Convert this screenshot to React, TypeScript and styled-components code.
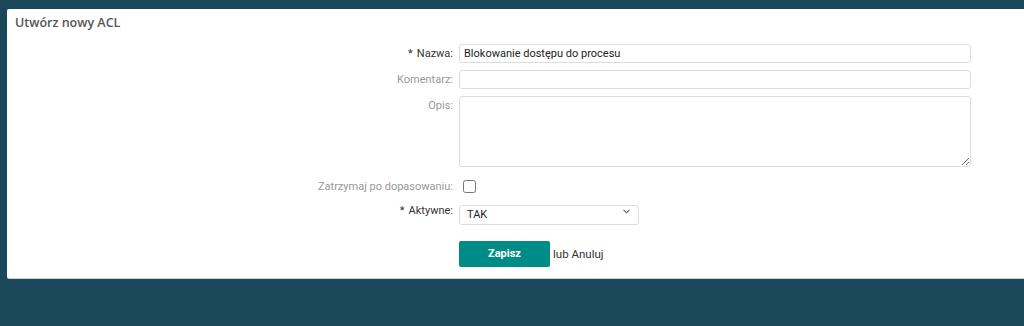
import React from "react";
import styled, { createGlobalStyle } from "styled-components";

const Global = createGlobalStyle`
  html, body { margin: 0; padding: 0; background: #1b475b; }
  body { font-family: "Open Sans", "Liberation Sans", sans-serif; }
`;

const Page = styled.div`
  padding: 9px 0 0 7px;
  height: 326px;
  box-sizing: border-box;
`;

const Panel = styled.div`
  background: #fff;
  border-radius: 2px 0 0 2px;
  box-shadow: 0 1px 0 #c9d0d4;
  height: 269px;
  box-sizing: border-box;
  padding: 6px 0 0 8px;
`;

const Title = styled.h2`
  margin: 0;
  font-size: 12.5px;
  font-weight: 600;
  color: #555;
  line-height: 16px;
`;

const Form = styled.form`
  display: grid;
  grid-template-columns: 438px 512px;
  column-gap: 6px;
  margin-top: 13px;
  align-items: start;
`;

const Label = styled.label<{ $required?: boolean; $h?: number }>`
  text-align: right;
  font-family: "Roboto", "Liberation Sans", sans-serif;
  font-size: 11px;
  line-height: ${(p) => p.$h ?? 19}px;
  color: ${(p) => (p.$required ? "#333" : "#999")};
  white-space: nowrap;
`;

const Star = styled.span`
  margin-right: 4px;
`;

const Field = styled.div<{ $mb?: number }>`
  margin-bottom: ${(p) => p.$mb ?? 7}px;
  display: flex;
  align-items: center;
`;

const TextInput = styled.input`
  width: 100%;
  height: 19px;
  box-sizing: border-box;
  border: 1px solid #ddd;
  border-radius: 3px;
  padding: 0 4px;
  font-family: "Roboto", "Liberation Sans", sans-serif;
  font-size: 11px;
  color: #222;
  outline: none;
`;

const TextArea = styled.textarea`
  width: 100%;
  height: 71px;
  box-sizing: border-box;
  border: 1px solid #ddd;
  border-radius: 3px;
  resize: vertical;
  font-family: "Roboto", "Liberation Sans", sans-serif;
  font-size: 11px;
  outline: none;
  display: block;
`;

const Check = styled.input`
  width: 13px;
  height: 13px;
  margin: 0 0 0 4px;
`;

const Select = styled.select`
  width: 180px;
  height: 20px;
  box-sizing: border-box;
  border: 1px solid #ddd;
  border-radius: 3px;
  padding: 0 0 0 7px;
  font-family: "Roboto", "Liberation Sans", sans-serif;
  font-size: 11px;
  color: #222;
  background: #fff;
  appearance: none;
  outline: none;
`;

const SelectWrap = styled.div`
  position: relative;
  width: 180px;
`;

const Chevron = styled.svg`
  position: absolute;
  right: 9px;
  top: 8px;
  pointer-events: none;
`;

const Actions = styled.div`
  display: flex;
  align-items: center;
  gap: 3px;
  margin-top: 16px;
`;

const Button = styled.button`
  width: 91px;
  height: 26px;
  background: #008b87;
  color: #fff;
  border: none;
  border-radius: 2px;
  font-family: "Roboto", "Liberation Sans", sans-serif;
  font-weight: 700;
  font-size: 11px;
`;

const Or = styled.span`
  font-family: "Roboto", "Liberation Sans", sans-serif;
  font-size: 11.5px;
  color: #333;
`;

const CancelLink = styled.a`
  color: #333;
  text-decoration: none;
`;

export default function App() {
  return (
    <>
      <Global />
      <Page>
        <Panel>
          <Title>Utwórz nowy ACL</Title>
          <Form onSubmit={(e) => e.preventDefault()}>
            <Label $required>
              <Star>*</Star>Nazwa:
            </Label>
            <Field>
              <TextInput defaultValue="Blokowanie dostępu do procesu" />
            </Field>

            <Label>Komentarz:</Label>
            <Field>
              <TextInput />
            </Field>

            <Label>Opis:</Label>
            <Field $mb={13}>
              <TextArea />
            </Field>

            <Label $h={14}>Zatrzymaj po dopasowaniu:</Label>
            <Field $mb={8}>
              <Check type="checkbox" />
            </Field>

            <Label $required $h={20}>
              <Star>*</Star>Aktywne:
            </Label>
            <Field $mb={0}>
              <SelectWrap>
                <Select defaultValue="TAK">
                  <option>TAK</option>
                  <option>NIE</option>
                </Select>
                <Chevron width="7" height="5" viewBox="0 0 7 5">
                  <path d="M0.5 0.8l3 3 3-3" fill="none" stroke="#666" strokeWidth="1.1" />
                </Chevron>
              </SelectWrap>
            </Field>

            <div />
            <Actions>
              <Button type="submit">Zapisz</Button>
              <Or>
                lub <CancelLink href="#">Anuluj</CancelLink>
              </Or>
            </Actions>
          </Form>
        </Panel>
      </Page>
    </>
  );
}
